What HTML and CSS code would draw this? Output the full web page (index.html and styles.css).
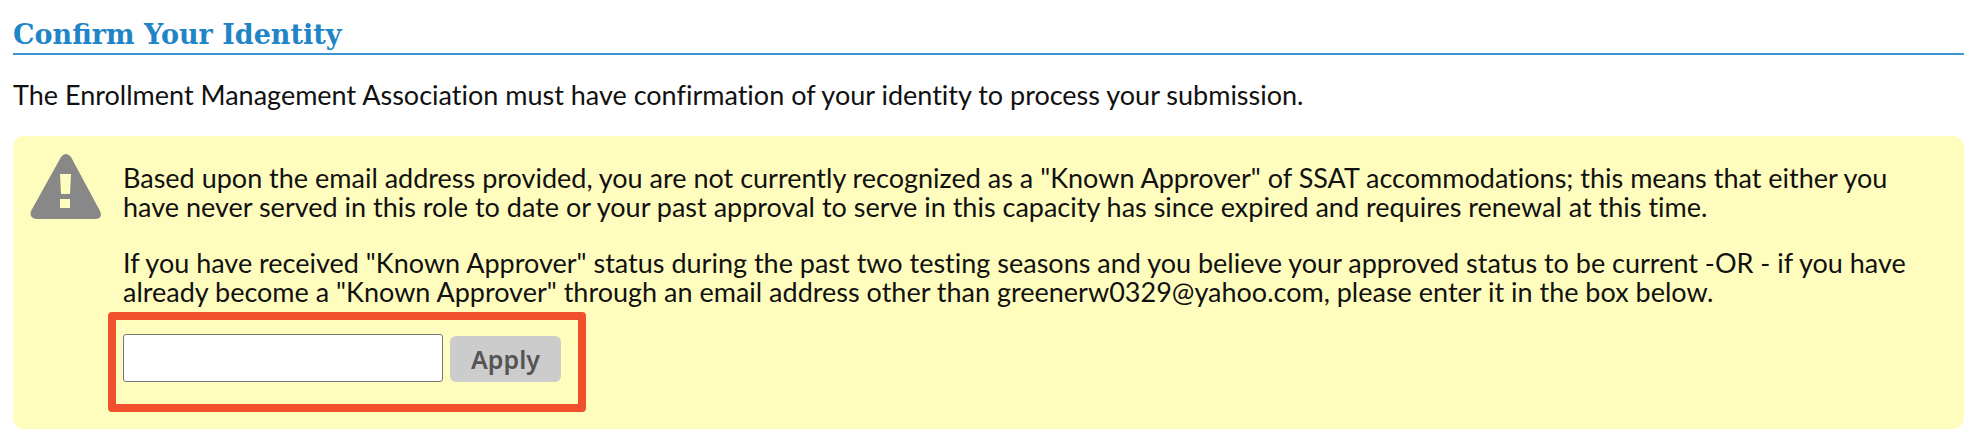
FILE: index.html
```
<!DOCTYPE html>
<html lang="en">
<head>
  <meta charset="UTF-8">
  <meta name="viewport" content="width=device-width, initial-scale=1.0">

  <title>Confirm Your Identity</title>
  <link rel="stylesheet" href="styles.css">
</head>
<body>

<h1>Confirm Your Identity</h1>

<p class="intro">The Enrollment Management Association must have confirmation of your identity to process your submission.</p>

<div class="notice">
  <svg class="warning-icon" viewBox="0 0 72 66" aria-hidden="true">
    <path fill="#888888" fill-rule="evenodd" d="M31 3 Q36 -3 41 3 L70 57 Q73 64 66 65 H6 Q-1 64 1 57 Z M30 20 L31 40 H40 L41 20 Z M30 45 V54 H40 V45 Z"/>
  </svg>

  <div class="notice-body">
    <p>Based upon the email address provided, you are not currently recognized as a "Known Approver" of SSAT accommodations; this means that either you have never served in this role to date or your past approval to serve in this capacity has since expired and requires renewal at this time.</p>
    <p>If you have received "Known Approver" status during the past two testing seasons and you believe your approved status to be current -OR - if you have already become a "Known Approver" through an email address other than greenerw0329@yahoo.com, please enter it in the box below.</p>

    <form id="approverForm" class="highlight">
      <input type="email" id="email" name="email" aria-label="Approver email address">
      <button type="submit">Apply</button>
    </form>
  </div>
</div>

</body>
</html>
```
FILE: styles.css
```
body {
  margin: 0;
  padding: 16px 12px 16px 13px;
  font-family: 'Lato', sans-serif;
  font-size: 27px;
  line-height: 29px;
  font-variant-ligatures: none;
  color: #111111;
  background-color: white;
}

h1 {
  margin: 0;
  font-family: 'DejaVu Serif', serif;
  font-size: 27px;
  font-variant-ligatures: normal;
  line-height: 37px;
  color: #1f85c7;
  border-bottom: 2px solid #3c95d0;
}

.intro {
  margin: 25px 0 27px;
}

.notice {
  display: flex;
  align-items: flex-start;
  gap: 21px;
  padding: 18px 16px 17px 17px;
  background-color: #fffdbd;
  border-radius: 11px;
}

.warning-icon {
  flex: none;
  width: 72px;
  height: 66px;
}

.notice-body {
  flex: 1;
  padding-top: 9px;
}

.notice-body p {
  margin: 0 0 27px;
}

.notice-body p:nth-of-type(2) {
  margin-bottom: 6px;
}

/* pulled left so that the field lines up with the text */
.highlight {
  display: flex;
  align-items: flex-end;
  gap: 7px;
  width: fit-content;
  margin-left: -15px;
  padding: 14px 17px 22px 7px;
  border: 8px solid #f0502b;
  border-radius: 4px;
}

input {
  width: 320px;
  height: 48px;
  padding: 8px;
  box-sizing: border-box;
  font: inherit;
  background-color: white;
  border: 1px solid #767676;
  border-radius: 3px;
}

button {
  width: 111px;
  height: 46px;
  padding: 0;
  font-family: 'Noto Sans', sans-serif;
  font-size: 25px;
  font-weight: 600;
  color: #555555;
  background-color: #cccccc;
  border: none;
  border-radius: 6px;
}
```
